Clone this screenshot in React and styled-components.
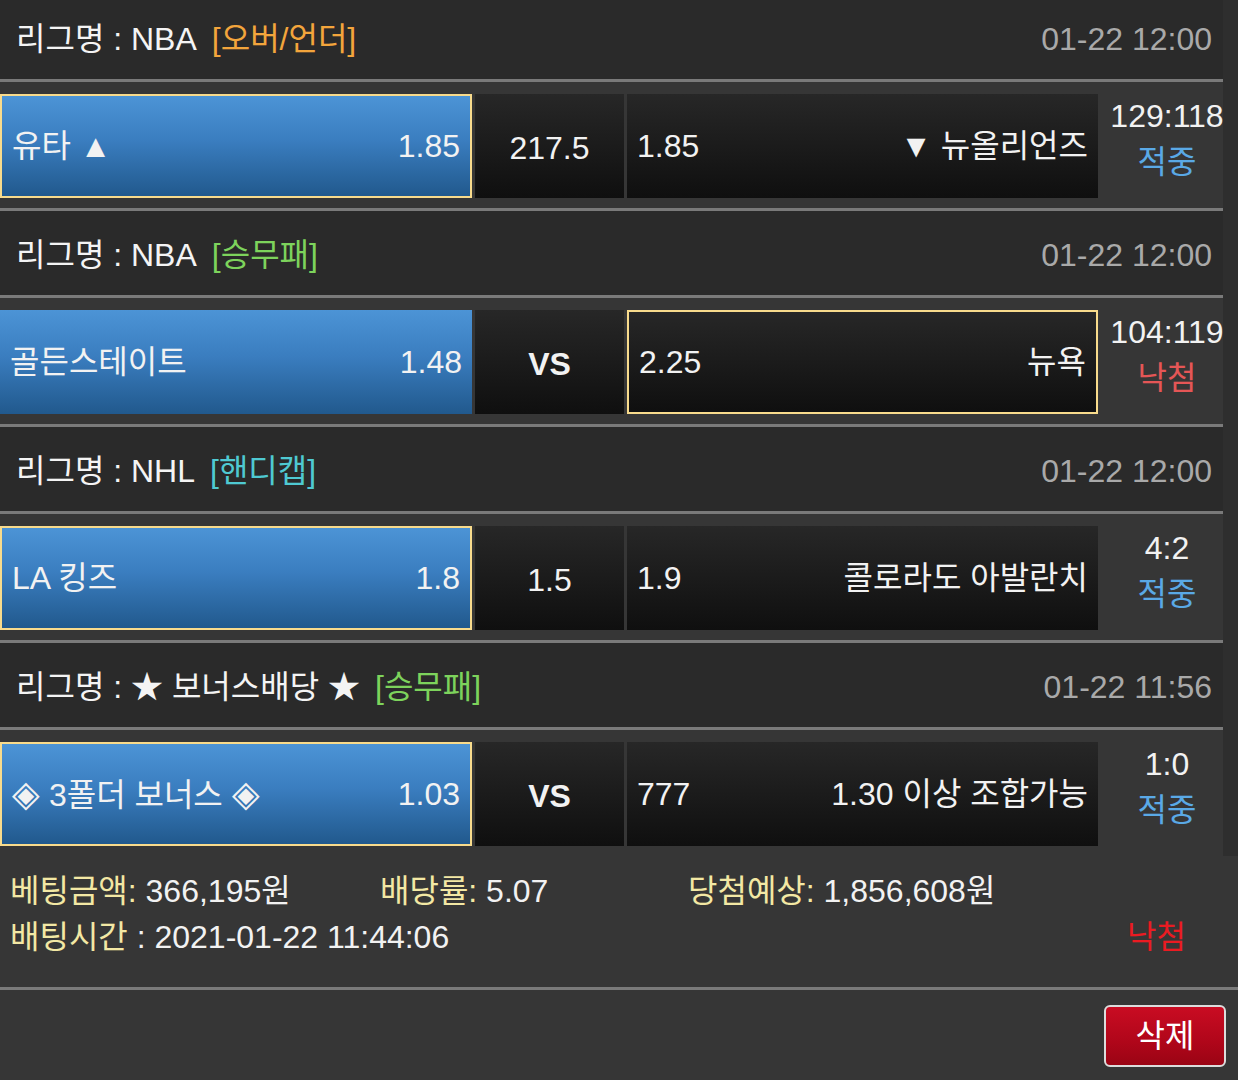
import React from 'react';
import styled, { createGlobalStyle } from 'styled-components';

const GlobalStyle = createGlobalStyle`
    body {
        margin: 0;
        background: #2e2e2e;
        font-family: 'Liberation Sans', Arial, 'Noto Sans CJK KR', sans-serif;
        color: #f2f2f2;
    }
`;

const Page = styled.div`
    width: 1238px;
    margin-top: -5px;
`;

const List = styled.div`
    width: 1223px;
`;

const LeagueHeader = styled.div`
    display: flex;
    align-items: center;
    justify-content: space-between;
    height: 87px;
    box-sizing: border-box;
    padding: 4px 11px 0 16px;
    background: #2a2a2a;
    border-bottom: 3px solid #7a7a7a;
    font-size: 32px;
    line-height: 40px;
`;

const LeagueName = styled.div`
    color: #f4f4f4;
    white-space: nowrap;
`;

const Tag = styled.span`
    margin-left: 15px;
    color: ${p => p.$color};
`;

const DateText = styled.div`
    color: #a9a9a9;
`;

const MatchRow = styled.div`
    display: flex;
    height: ${p => (p.$last ? '126px' : '129px')};
    box-sizing: border-box;
    padding: 12px 0 10px;
    gap: 3px;
    background: #363636;
    border-bottom: ${p => (p.$last ? 'none' : '3px solid #7a7a7a')};
`;

const OddsCell = styled.div`
    display: flex;
    flex-shrink: 0;
    align-items: center;
    justify-content: space-between;
    box-sizing: border-box;
    padding: 0 10px;
    font-size: 32px;
    line-height: 40px;
    white-space: nowrap;
    border: ${p => (p.$selected ? '2px solid #f8db8c' : 'none')};
`;

const HomeCell = styled(OddsCell)`
    width: 472px;
    background: linear-gradient(to bottom, #4c94d6 0%, #3a7dbf 45%, #21598d 100%);
`;

const AwayCell = styled(OddsCell)`
    width: 471px;
    background: linear-gradient(to bottom, #272727 0%, #1a1a1a 55%, #0f0f0f 100%);
`;

const Diamond = styled.span`
    font-size: 36px;
`;

const CenterCell = styled.div`
    display: flex;
    flex-shrink: 0;
    align-items: center;
    justify-content: center;
    width: 149px;
    padding-top: 4px;
    box-sizing: border-box;
    background: linear-gradient(to bottom, #272727 0%, #1a1a1a 55%, #0f0f0f 100%);
    font-size: 32px;
    line-height: 40px;
    font-weight: ${p => (p.$bold ? 700 : 400)};
`;

const ScoreCol = styled.div`
    flex: 1;
    min-width: 0;
    display: flex;
    flex-direction: column;
    align-items: center;
    gap: 2px;
    padding-left: 10px;
    font-size: 32px;
    line-height: 44px;
    white-space: nowrap;
`;

const Result = styled.div`
    color: ${p => (p.$win ? '#5aa9e6' : '#e55656')};
`;

const Summary = styled.div`
    background: #363636;
    padding: 12px 52px 27px 10px;
    border-bottom: 3px solid #7a7a7a;
    font-size: 32px;
    line-height: 46px;
`;

const SummaryLine = styled.div`
    display: flex;
    align-items: center;
    white-space: nowrap;
`;

const SummaryItem = styled.div`
    width: ${p => p.$width || 'auto'};
`;

const Label = styled.span`
    color: #f3e8a4;
`;

const FinalResult = styled.div`
    margin-left: auto;
    color: #ea1b22;
`;

const Footer = styled.div`
    display: flex;
    justify-content: flex-end;
    height: 100px;
    padding: 15px 12px 0 0;
    box-sizing: border-box;
    background: #363636;
`;

const DeleteButton = styled.button`
    width: 122px;
    height: 62px;
    border: 2px solid #dcdcdc;
    border-radius: 6px;
    background: linear-gradient(to bottom, #c90c22 0%, #b0061a 60%, #9a0414 100%);
    color: #fff;
    font-family: inherit;
    font-size: 32px;
    line-height: 40px;
    cursor: pointer;
`;

const matches = [
    {
        league: 'NBA',
        tag: '[오버/언더]',
        tagColor: '#f3a53c',
        date: '01-22 12:00',
        home: '유타 ▲',
        homeOdds: '1.85',
        mid: '217.5',
        awayOdds: '1.85',
        away: '▼ 뉴올리언즈',
        pick: 'home',
        score: '129:118',
        win: true
    },
    {
        league: 'NBA',
        tag: '[승무패]',
        tagColor: '#7dd35c',
        date: '01-22 12:00',
        home: '골든스테이트',
        homeOdds: '1.48',
        mid: 'VS',
        awayOdds: '2.25',
        away: '뉴욕',
        pick: 'away',
        score: '104:119',
        win: false
    },
    {
        league: 'NHL',
        tag: '[핸디캡]',
        tagColor: '#4fc9d2',
        date: '01-22 12:00',
        home: 'LA 킹즈',
        homeOdds: '1.8',
        mid: '1.5',
        awayOdds: '1.9',
        away: '콜로라도 아발란치',
        pick: 'home',
        score: '4:2',
        win: true
    },
    {
        league: '★ 보너스배당 ★',
        tag: '[승무패]',
        tagColor: '#7dd35c',
        date: '01-22 11:56',
        home: (
            <>
                <Diamond>◈</Diamond> 3폴더 보너스 <Diamond>◈</Diamond>
            </>
        ),
        homeOdds: '1.03',
        mid: 'VS',
        awayOdds: '777',
        away: '1.30 이상 조합가능',
        pick: 'home',
        score: '1:0',
        win: true
    }
];

const App = () => (
    <Page>
        <GlobalStyle />
        <List>
            {matches.map((m, i) => (
                <React.Fragment key={i}>
                    <LeagueHeader>
                        <LeagueName>
                            리그명 : {m.league}
                            <Tag $color={m.tagColor}>{m.tag}</Tag>
                        </LeagueName>
                        <DateText>{m.date}</DateText>
                    </LeagueHeader>
                    <MatchRow $last={i === matches.length - 1}>
                        <HomeCell $selected={m.pick === 'home'}>
                            <span>{m.home}</span>
                            <span>{m.homeOdds}</span>
                        </HomeCell>
                        <CenterCell $bold={m.mid === 'VS'}>{m.mid}</CenterCell>
                        <AwayCell $selected={m.pick === 'away'}>
                            <span>{m.awayOdds}</span>
                            <span>{m.away}</span>
                        </AwayCell>
                        <ScoreCol>
                            <div>{m.score}</div>
                            <Result $win={m.win}>{m.win ? '적중' : '낙첨'}</Result>
                        </ScoreCol>
                    </MatchRow>
                </React.Fragment>
            ))}
        </List>
        <Summary>
            <SummaryLine>
                <SummaryItem $width="370px">
                    <Label>베팅금액:</Label> 366,195원
                </SummaryItem>
                <SummaryItem $width="308px">
                    <Label>배당률:</Label> 5.07
                </SummaryItem>
                <SummaryItem>
                    <Label>당첨예상:</Label> 1,856,608원
                </SummaryItem>
            </SummaryLine>
            <SummaryLine>
                <SummaryItem>
                    <Label>배팅시간</Label> : 2021-01-22 11:44:06
                </SummaryItem>
                <FinalResult>낙첨</FinalResult>
            </SummaryLine>
        </Summary>
        <Footer>
            <DeleteButton>삭제</DeleteButton>
        </Footer>
    </Page>
);

export default App;
